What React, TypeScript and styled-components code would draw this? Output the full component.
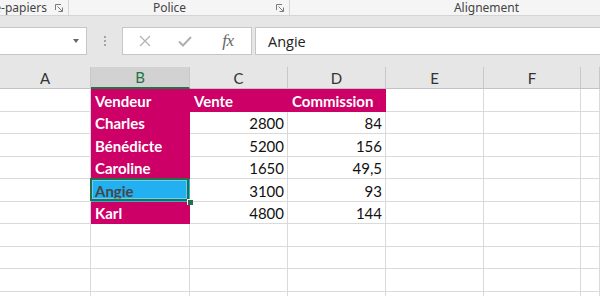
import React from 'react';
import styled, { createGlobalStyle } from 'styled-components';

const GlobalStyle = createGlobalStyle`
  html, body {
    margin: 0;
    padding: 0;
  }
  body {
    width: 600px;
    height: 296px;
    overflow: hidden;
    background: #e6e6e6;
    font-family: 'Lato', 'Liberation Sans', sans-serif;
  }
`;

const COLUMNS = ['A', 'B', 'C', 'D', 'E', 'F', ''];
const COL_WIDTHS = '91px 99px 98px 98px 98px 97px 1fr';
const PINK = '#cc0066';
const BLUE = '#22b0f0';
const GREEN = '#217346';

type CellData = {
  text?: string;
  fill?: string;
  align?: 'left' | 'right';
  bold?: boolean;
  color?: string;
  selected?: boolean;
};

const head = (text: string): CellData => ({ text, fill: PINK, bold: true, color: '#fff' });
const num = (text: string): CellData => ({ text, align: 'right' });
const blank = (): CellData[] => [{}, {}, {}, {}, {}, {}, {}];

const ROWS: CellData[][] = [
  [{}, head('Vendeur'), head('Vente'), head('Commission'), {}, {}, {}],
  [{}, head('Charles'), num('2800'), num('84'), {}, {}, {}],
  [{}, head('Bénédicte'), num('5200'), num('156'), {}, {}, {}],
  [{}, head('Caroline'), num('1650'), num('49,5'), {}, {}, {}],
  [{}, { text: 'Angie', fill: BLUE, bold: true, color: '#474747', selected: true }, num('3100'), num('93'), {}, {}, {}],
  [{}, head('Karl'), num('4800'), num('144'), {}, {}, {}],
  blank(),
  blank(),
  blank(),
  blank(),
];

// ribbon group captions
const RibbonLabels = styled.div`
  display: flex;
  height: 15px;
  background: #f5f5f5;
  border-bottom: 1px solid #d5d5d5;
  font-family: 'Noto Sans', 'Open Sans', sans-serif;
  font-size: 12px;
  line-height: 15px;
  color: #444;
  overflow: hidden;
`;

const Group = styled.div<{ $width: number }>`
  flex: 0 0 ${(p) => p.$width}px;
  box-sizing: border-box;
  display: flex;
  border-right: 1px solid #d5d5d5;
  overflow: hidden;
`;

const GroupLabel = styled.div<{ $clipLeft?: boolean }>`
  flex: 1;
  display: flex;
  justify-content: ${(p) => (p.$clipLeft ? 'flex-end' : 'center')};
  padding-right: ${(p) => (p.$clipLeft ? '2px' : '0')};
  overflow: hidden;
  white-space: nowrap;
`;

const Launcher = styled.div`
  flex: 0 0 19px;
  display: flex;
  align-items: center;
  justify-content: center;
`;

const Band = styled.div`
  height: 11px;
`;

// formula bar
const FormulaBar = styled.div`
  display: flex;
  height: 28px;
  margin-bottom: 12px;
`;

const NameBox = styled.div`
  flex: 0 0 88px;
  box-sizing: border-box;
  margin-left: -1px;
  background: #fff;
  border: 1px solid #c6c6c6;
  display: flex;
  align-items: center;
  justify-content: flex-end;
  padding-right: 7px;
`;

const DropArrow = styled.span`
  width: 0;
  height: 0;
  border-left: 3.5px solid transparent;
  border-right: 3.5px solid transparent;
  border-top: 4px solid #666;
`;

const Grip = styled.div`
  flex: 0 0 35px;
  display: flex;
  flex-direction: column;
  align-items: center;
  justify-content: center;
  gap: 2px;
`;

const GripDot = styled.span`
  width: 2px;
  height: 2px;
  background: #a3a3a3;
`;

const FxBox = styled.div`
  flex: 0 0 129px;
  box-sizing: border-box;
  background: #fff;
  border: 1px solid #c6c6c6;
  display: grid;
  grid-template-columns: 40px 40px 46px;
  padding-left: 2px;
  align-items: center;
  justify-items: center;
`;

const FxText = styled.span`
  font-family: 'Liberation Serif', serif;
  font-style: italic;
  font-size: 17px;
  color: #666;
  letter-spacing: -0.5px;
`;

const FormulaInput = styled.div`
  flex: 1;
  margin-left: 3px;
  margin-right: -1px;
  background: #fff;
  border: 1px solid #c6c6c6;
  display: flex;
  align-items: center;
  padding-left: 12px;
  font-family: 'Open Sans', sans-serif;
  font-size: 14.5px;
  color: #222;
`;

// sheet
const Sheet = styled.div`
  display: grid;
  grid-template-columns: ${COL_WIDTHS};
  grid-template-rows: 22px;
  grid-auto-rows: 22.5px;
`;

const HeaderCell = styled.div<{ $active?: boolean }>`
  box-sizing: border-box;
  display: flex;
  align-items: center;
  justify-content: center;
  font-size: 15px;
  color: ${(p) => (p.$active ? GREEN : '#333')};
  background: ${(p) => (p.$active ? '#d2d2d2' : '#e6e6e6')};
  border-right: 1px solid #c8c8c8;
  border-bottom: ${(p) => (p.$active ? `2px solid ${GREEN}` : '1px solid #c2c2c2')};
`;

const Cell = styled.div<{
  $fill?: string;
  $align?: 'left' | 'right';
  $bold?: boolean;
  $color?: string;
  $selected?: boolean;
}>`
  position: relative;
  box-sizing: border-box;
  display: flex;
  align-items: flex-end;
  justify-content: ${(p) => (p.$align === 'right' ? 'flex-end' : 'flex-start')};
  padding: 0 3px 1px 4px;
  background: ${(p) => p.$fill ?? '#fff'};
  border-right: 1px solid ${(p) => p.$fill ?? '#dadada'};
  border-bottom: 1px solid ${(p) => p.$fill ?? '#dadada'};
  font-size: 15px;
  line-height: 18px;
  font-weight: ${(p) => (p.$bold ? 700 : 400)};
  color: ${(p) => p.$color ?? '#111'};
  white-space: nowrap;

  ${(p) =>
    p.$selected &&
    `
    &::after {
      content: '';
      position: absolute;
      inset: -1px 0 0 -1px;
      border: 2px solid ${GREEN};
      box-shadow: inset 0 0 0 1px rgba(255, 255, 255, 0.35);
      z-index: 2;
    }
    &::before {
      content: '';
      position: absolute;
      right: -4px;
      bottom: -4px;
      width: 5px;
      height: 5px;
      background: ${GREEN};
      border-left: 1px solid #fff;
      border-top: 1px solid #fff;
      z-index: 3;
    }
  `}
`;

const LauncherIcon = () => (
  <svg width="8" height="8" viewBox="0 0 8 8" fill="none" stroke="#7a7a7a" strokeWidth="1">
    <path d="M0.5 6V0.5H6" />
    <path d="M2.5 2.5L7 7M7.5 3.5V7.5H3.5" />
  </svg>
);

const CancelIcon = () => (
  <svg width="12" height="12" viewBox="0 0 12 12" stroke="#b3b3b3" strokeWidth="1.3">
    <path d="M1 1L11 11M11 1L1 11" />
  </svg>
);

const EnterIcon = () => (
  <svg width="14" height="11" viewBox="0 0 14 11" fill="none" stroke="#b0b0b0" strokeWidth="2">
    <path d="M1 5.5L5 9.5L13 1" />
  </svg>
);

export default function App() {
  return (
    <>
      <GlobalStyle />
      <RibbonLabels>
        <Group $width={69}>
          <GroupLabel $clipLeft>
            <span>Presse-papiers</span>
          </GroupLabel>
          <Launcher>
            <LauncherIcon />
          </Launcher>
        </Group>
        <Group $width={221}>
          <GroupLabel>Police</GroupLabel>
          <Launcher>
            <LauncherIcon />
          </Launcher>
        </Group>
        <Group $width={394}>
          <GroupLabel>Alignement</GroupLabel>
        </Group>
      </RibbonLabels>
      <Band />
      <FormulaBar>
        <NameBox>
          <DropArrow />
        </NameBox>
        <Grip>
          <GripDot />
          <GripDot />
          <GripDot />
        </Grip>
        <FxBox>
          <CancelIcon />
          <EnterIcon />
          <FxText>fx</FxText>
        </FxBox>
        <FormulaInput>Angie</FormulaInput>
      </FormulaBar>
      <Sheet>
        {COLUMNS.map((c) => (
          <HeaderCell key={c || 'G'} $active={c === 'B'}>
            {c}
          </HeaderCell>
        ))}
        {ROWS.map((row, r) =>
          row.map((cell, c) => (
            <Cell
              key={`${r}-${c}`}
              $fill={cell.fill}
              $align={cell.align}
              $bold={cell.bold}
              $color={cell.color}
              $selected={cell.selected}
            >
              {cell.text}
            </Cell>
          ))
        )}
      </Sheet>
    </>
  );
}
